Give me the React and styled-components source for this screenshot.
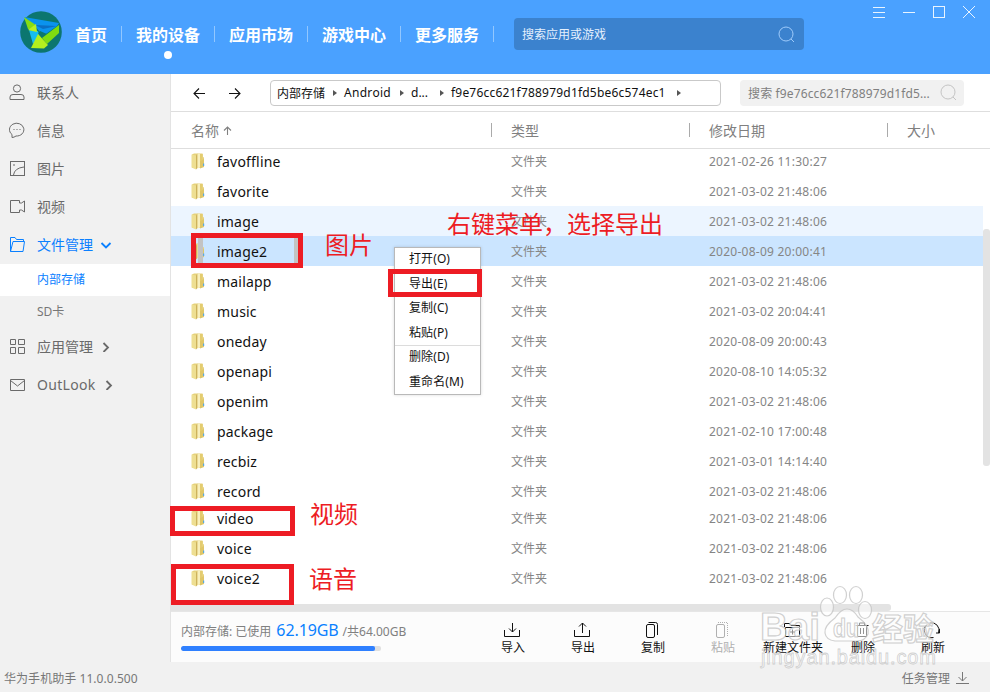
/* eslint-disable react/prop-types */
import styled, { createGlobalStyle } from 'styled-components';

const GlobalStyle = createGlobalStyle`
* {
    box-sizing: border-box;
}
body {
    margin: 0;
    font-family: "Noto Sans", "Noto Sans CJK SC", sans-serif;
    font-size: 12px;
    overflow: hidden;
}
svg {
    display: block;
    flex: none;
}
`;

const Window = styled.div`
    position: relative;
    display: flex;
    flex-direction: column;
    width: 990px;
    height: 692px;
    background: #f1f1f1;
    overflow: hidden;
    white-space: nowrap;
`;

/* ---------- header ---------- */

const Header = styled.header`
    display: flex;
    height: 74px;
    padding-left: 20px;
    background: #4aa1ff;
`;

const Logo = styled.svg`
    margin-top: 11px;
`;

const Nav = styled.nav`
    display: flex;
    height: 30px;
    margin: 19px 0 0 13px;
`;

const NavItem = styled.div`
    position: relative;
    display: flex;
    align-items: center;
    margin-right: 14px;
    padding-top: 1px;
    line-height: 30px;
    font-size: 16px;
    font-weight: bold;
    color: #fff;

    &::after {
        content: "";
        width: 1px;
        height: 16px;
        margin: -2px 0 0 14px;
        background: #92c7ff;
    }
`;

const ActiveDot = styled.i`
    position: absolute;
    left: 28px;
    top: 32px;
    width: 8px;
    height: 8px;
    border-radius: 50%;
    background: #fff;
`;

const AppSearch = styled.div`
    display: flex;
    align-items: center;
    justify-content: space-between;
    width: 290px;
    height: 32px;
    margin: 18px 0 0 6px;
    padding: 0 9px 0 8px;
    border-radius: 4px;
    background: #3b82ce;
    color: #e4f0fd;
`;

const WindowButtons = styled.div`
    display: flex;
    gap: 16px;
    margin: 5px 14px 0 auto;
`;

/* ---------- sidebar ---------- */

const Body = styled.div`
    display: flex;
    height: 588px;
`;

const Sidebar = styled.aside`
    width: 171px;
    border-right: 1px solid #e3e3e3;
`;

const SideItem = styled.div`
    display: flex;
    align-items: center;
    height: 38px;
    padding: 0 0 2px 9px;
    font-size: 14px;
    color: ${({ $active }) => ($active ? '#0a80ff' : '#6a6a6a')};

    span {
        margin: 0 7px 0 12px;
        letter-spacing: ${({ $spacing }) => $spacing || 0}px;
    }
`;

const SubItem = styled.div`
    height: 32px;
    padding-left: 37px;
    line-height: 32px;
    background: ${({ $active }) => ($active ? '#fff' : 'transparent')};
    color: ${({ $active }) => ($active ? '#0a80ff' : '#777')};
`;

/* ---------- main panel ---------- */

const Main = styled.main`
    display: flex;
    flex-direction: column;
    width: 819px;
    background: #fff;
`;

const PathBar = styled.div`
    display: flex;
    align-items: center;
    height: 38px;
    padding-left: 22px;
    border-bottom: 1px solid #dedede;
`;

const Arrows = styled.div`
    display: flex;
    gap: 24px;
    width: 77px;
    color: #111;
`;

const Breadcrumb = styled.div`
    display: flex;
    align-items: center;
    width: 451px;
    height: 26px;
    padding-left: 6px;
    border: 1px solid #c9c9c9;
    border-radius: 4px;
    color: #111;
`;

const Crumb = styled.span`
    width: ${({ $width }) => $width}px;
    letter-spacing: ${({ $spacing }) => $spacing || 0}px;
`;

const CrumbArrow = styled.i`
    margin: 1px 7px 0 8px;
    border-left: 4px solid #555;
    border-top: 3px solid transparent;
    border-bottom: 3px solid transparent;
`;

const FolderSearch = styled.div`
    display: flex;
    align-items: center;
    justify-content: space-between;
    width: 224px;
    height: 26px;
    margin-left: 19px;
    padding: 0 7px 0 8px;
    border-radius: 4px;
    background: #f1f1f1;
    color: #808080;
    letter-spacing: 0.13px;
`;

const TableHead = styled.div`
    display: grid;
    grid-template-columns: 321px 198px 198px 1fr;
    align-items: center;
    height: 37px;
    border-bottom: 1px solid #dedede;
    font-size: 14px;
    color: #808080;
`;

const HeadCell = styled.div`
    display: flex;
    align-items: center;
    gap: 4px;
    height: 14px;
    padding-left: ${({ $first }) => ($first ? 20 : 19)}px;
    border-right: 1px solid #aaa;

    &:last-child {
        border-right: none;
    }
`;

const ListArea = styled.div`
    display: flex;
    height: 455px;
    overflow: hidden;
`;

const Rows = styled.div`
    width: 812px;
    margin-top: -3px;
`;

const Row = styled.div`
    display: grid;
    grid-template-columns: 20px 26px 294px 198px 1fr;
    align-items: start;
    height: ${({ $short }) => ($short ? 27 : 30)}px;
    background: ${({ $tone }) => $tone || 'transparent'};
    color: #858585;

    svg {
        margin-top: 7px;
    }
`;

const FileName = styled.span`
    line-height: 32px;
    font-size: 14px;
    letter-spacing: 0.2px;
    color: #111;
`;

const Cell = styled.span`
    line-height: 32px;
    letter-spacing: ${({ $spacing }) => $spacing || 0}px;
`;

const VScroll = styled.div`
    width: 7px;
    height: 237px;
    margin-top: 80px;
    border-radius: 3px;
    background: #e3e3e3;
`;

const HScroll = styled.div`
    width: 720px;
    height: 7px;
    border-radius: 0 3px 3px 0;
    background: #e3e3e3;
`;

const ActionBar = styled.div`
    display: flex;
    height: 51px;
    padding-left: 10px;
    border-top: 1px solid #e6e6e6;
    background: #fcfcfc;
`;

const Storage = styled.div`
    width: 297px;
    padding-top: 6px;
    color: #808080;
`;

const StorageText = styled.div`
    display: flex;
    align-items: baseline;
    height: 28px;
    line-height: 24px;
`;

const Used = styled.b`
    margin: 0 4px 0 5px;
    font-size: 16px;
    font-weight: normal;
    letter-spacing: -0.1px;
    color: #0a80ff;
`;

const Bar = styled.div`
    width: 200px;
    height: 5px;
    border-radius: 2px;
    background: #e0e0e0;
    overflow: hidden;

    &::before {
        content: "";
        display: block;
        width: 194px;
        height: 5px;
        border-radius: 2px;
        background: #2f80ff;
    }
`;

const Action = styled.div`
    display: flex;
    flex-direction: column;
    align-items: center;
    width: 70px;
    padding-top: 9px;
    line-height: 18px;
    color: ${({ $disabled }) => ($disabled ? '#b0b0b0' : '#111')};

    svg {
        margin-left: -2px;
    }
`;

const StatusBar = styled.footer`
    display: flex;
    align-items: center;
    justify-content: space-between;
    height: 30px;
    padding: 2px 21px 0 4px;
    letter-spacing: 0.05px;
    color: #777;
`;

const TaskLink = styled.div`
    display: flex;
    align-items: center;
    gap: 5px;
`;

/* ---------- things lying over the window ---------- */

const Menu = styled.div`
    position: absolute;
    left: 394px;
    top: 247px;
    width: 87px;
    height: 148px;
    border: 1px solid #b9b9b9;
    background: #fff;
    box-shadow: 0 0 3px rgba(0, 0, 0, 0.15);
`;

const MenuItem = styled.div`
    height: 24.5px;
    padding-left: 14px;
    line-height: 22px;
    letter-spacing: 0.1px;
    color: #111;
    border-bottom: ${({ $last }) => ($last ? '1px solid #dcdcdc' : 'none')};
`;

const Frame = styled.div`
    position: absolute;
    left: ${({ $x }) => $x}px;
    top: ${({ $y }) => $y}px;
    width: ${({ $w }) => $w}px;
    height: ${({ $h }) => $h}px;
    border: 5px solid #ed1c24;
`;

const Smudge = styled.i`
    position: absolute;
    top: 0;
    left: ${({ $x }) => $x}px;
    width: ${({ $w }) => $w}px;
    height: 100%;
    background: #c3c3c3;
`;

const Note = styled.div`
    position: absolute;
    left: ${({ $x }) => $x}px;
    top: ${({ $y }) => $y}px;
    font-size: 24px;
    line-height: 30px;
    color: #ed1c24;
`;

const Watermark = styled.svg`
    position: absolute;
    left: 755px;
    top: 580px;
`;

/* ---------- icons ---------- */

const Stroke = ({ size = 16, w = 1, children, ...rest }) => (
  <svg width={size} height={size} viewBox={`0 0 ${size} ${size}`} fill="none" stroke="currentColor" strokeWidth={w} {...rest}>
    {children}
  </svg>
);

const HuaweiLogo = () => (
  <Logo width="42" height="42" viewBox="0 0 42 42">
    <circle cx="21" cy="21" r="20.8" fill="#0c766f" />
    <path d="M4 6 L39 12 L37 15 L23 25 L15 15 Z" fill="#0a93ee" />
    <path d="M15 14 L37 15 L23 18 Z" fill="#0a6fc4" />
    <path d="M9 19 L18 20 L20 26 L13 33 Z" fill="#16bdf2" />
    <path d="M20 20 L27 23 L22 27 L18 23 Z" fill="#0c766f" />
    <path d="M39 14 L39 22 L27 33 L22 27 Z" fill="#7fdc10" />
    <path d="M4 6 L15 13.5 L13 18 L8 18 Z" fill="#86dc14" />
    <path d="M8 19 L16 13 L17 21 Z" fill="#b9ef22" />
    <path d="M18 23 L28 34 L24 37.5 L11 37 Z" fill="#b4f01e" />
  </Logo>
);

const SearchIcon = ({ color }) => (
  <Stroke size={17} color={color}>
    <circle cx="8" cy="8" r="7" />
    <path d="M13 13 L16 16" />
  </Stroke>
);

const FolderIcon = () => (
  <svg width="14" height="17" viewBox="0 0 14 17">
    <path d="M1 1.5 L3 .5 H11 Q12 .5 12 1.5 V4 L13 4.5 V13.5 L9 15 H1 Z" fill="#e6d27c" />
    <path d="M.5 1.5 L5 2.5 V16.5 L.5 14.5 Z" fill="#eedf92" />
    <path d="M5 2.5 L6.5 .5 V15 L5 16.5 Z" fill="#cdb25c" />
    <path d="M6.5 .8 H9 V14.5 L6.5 15.5 Z" fill="#f8efbc" />
    <path d="M9 1 H11 V7 L9 8 Z" fill="#e4cc70" />
    <path d="M9 8 L13 6 V14 L9 15.5 Z" fill="#dfc668" />
    <rect x="12" y="10.5" width="1.2" height="2.5" fill="#58a8de" />
  </svg>
);

const sideIcons = {
  contact: (
    <Stroke>
      <circle cx="8" cy="4.5" r="3.6" />
      <path d="M1 15.5 V13 Q1 10.5 4 10.5 H12 Q15 10.5 15 13 V15.5 Z" />
    </Stroke>
  ),
  message: (
    <Stroke>
      <path d="M3 15.5 V12.5 A7.2 6.4 0 1 1 7 14 Q5 15.5 3 15.5 Z" />
      <path d="M4.5 7.5 h1 M7.5 7.5 h1 M10.5 7.5 h1" />
    </Stroke>
  ),
  picture: (
    <Stroke>
      <rect x="1.5" y="1.5" width="14" height="14" />
      <path d="M4 5 h2 M4.5 15 Q5.5 8 15 7" />
    </Stroke>
  ),
  video: (
    <Stroke>
      <path d="M10.5 5 V2.5 H1.5 V14.5 H10.5 V12 L12.5 12 L15.5 14 V3 L12.5 5 H10.5" />
    </Stroke>
  ),
  files: (
    <Stroke>
      <path d="M1.5 15.5 V1.5 H6 L7.5 3.5 H14.5 V5.5 M1.5 15.5 L4 5.5 H15.5 L14 15.5 Z" />
    </Stroke>
  ),
  apps: (
    <Stroke>
      <path d="M1.5 1.5 h5 v5 h-5 Z M9.5 1.5 h6 v5 h-6 Z M1.5 9.5 h5 v6 h-5 Z M9.5 9.5 h6 v6 h-6 Z" />
    </Stroke>
  ),
  mail: (
    <Stroke>
      <path d="M1.5 3.5 h14 v11 h-14 Z M1.5 4.5 L8.5 10 L15.5 4.5" />
    </Stroke>
  ),
};

const ChevronDown = () => (
  <Stroke size={12} w={1.8}>
    <path d="M1.5 5 L6 9.5 L10.5 5" />
  </Stroke>
);

const ChevronRight = () => (
  <Stroke size={12} w={1.8}>
    <path d="M3.5 3 L8 7.5 L3.5 12" />
  </Stroke>
);

const ActionIcon = ({ children }) => (
  <svg width="18" height="18" viewBox="0 0 18 18" fill="none" stroke="currentColor">
    {children}
  </svg>
);

/* ---------- data ---------- */

const files = [
  ['favoffline', '2021-02-26 11:30:27'],
  ['favorite', '2021-03-02 21:48:06'],
  ['image', '2021-03-02 21:48:06', '#ecf5ff'],
  ['image2', '2020-08-09 20:00:41', '#cbe5ff'],
  ['mailapp', '2021-03-02 21:48:06'],
  ['music', '2021-03-02 20:04:41'],
  ['oneday', '2020-08-09 20:00:43'],
  ['openapi', '2020-08-10 14:05:32'],
  ['openim', '2021-03-02 21:48:06'],
  ['package', '2021-02-10 17:00:48'],
  ['recbiz', '2021-03-01 14:14:40'],
  ['record', '2021-03-02 21:48:06'],
  ['video', '2021-03-02 21:48:06'],
  ['voice', '2021-03-02 21:48:06'],
  ['voice2', '2021-03-02 21:48:06'],
];

const actions = [
  ['导入', <path key="i" d="M1.5 9 V15.5 H16.5 V9 M9.5 2 V11 M6 7.5 L9.5 11 L13 7.5" />],
  ['导出', <path key="i" d="M1.5 9 V15.5 H16.5 V9 M9.5 12 V2 M6 5.5 L9.5 2 L13 5.5" />],
  ['复制', (
    <g key="i">
      <rect x="3.5" y="3.5" width="8" height="13" rx="1.5" />
      <path d="M5.5 1.5 H12.5 Q14.5 1.5 14.5 3.5 V14" />
    </g>
  )],
  ['粘贴', (
    <g key="i">
      <rect x="3.5" y="3.5" width="8" height="13" rx="1.5" />
      <path d="M5 1.5 H14.5 V15" strokeDasharray="1 1" />
    </g>
  )],
  ['新建文件夹', <path key="i" d="M1.5 6 V2.5 H6.5 L8 4.5 H16.5 V6.5 H2.5 V15.5 H16.5 V6.5 M9.5 8.5 v5 M7 11 h5" />],
  ['删除', <path key="i" d="M2.5 4.5 H15.5 M6.5 4.5 V2 H11.5 V4.5 M4.5 4.5 V15.5 H13.5 V4.5 M7.5 7 V13 M10.5 7 V13" />],
  ['刷新', <path key="i" d="M10.5 16.5 A7.5 7.5 0 0 1 4 3.5 M6.5 2 A7.5 7.5 0 0 1 15.5 12 M16.5 8 V12 H13" />],
];

const App = () => {
  return (
    <>
      <GlobalStyle />
      <Window>
        <Header>
          <HuaweiLogo />
          <Nav>
            <NavItem>首页</NavItem>
            <NavItem>我的设备<ActiveDot /></NavItem>
            <NavItem>应用市场</NavItem>
            <NavItem>游戏中心</NavItem>
            <NavItem>更多服务</NavItem>
          </Nav>
          <AppSearch>
            搜索应用或游戏
            <SearchIcon color="#9fcbfb" />
          </AppSearch>
          <WindowButtons>
            <Stroke size={14} color="#e9f4ff"><path d="M1 2.5 H13 M1 7.5 H13 M1 12.5 H13" /></Stroke>
            <Stroke size={14} color="#e9f4ff"><path d="M1 7.5 H13" /></Stroke>
            <Stroke size={14} color="#e9f4ff"><rect x="1.5" y="1.5" width="11" height="11" /></Stroke>
            <Stroke size={14} color="#e9f4ff"><path d="M1 1 L13 13 M13 1 L1 13" /></Stroke>
          </WindowButtons>
        </Header>

        <Body>
          <Sidebar>
            <SideItem>{sideIcons.contact}<span>联系人</span></SideItem>
            <SideItem>{sideIcons.message}<span>信息</span></SideItem>
            <SideItem>{sideIcons.picture}<span>图片</span></SideItem>
            <SideItem>{sideIcons.video}<span>视频</span></SideItem>
            <SideItem $active>{sideIcons.files}<span>文件管理</span><ChevronDown /></SideItem>
            <SubItem $active>内部存储</SubItem>
            <SubItem>SD卡</SubItem>
            <SideItem>{sideIcons.apps}<span>应用管理</span><ChevronRight /></SideItem>
            <SideItem $spacing={0.3}>{sideIcons.mail}<span>OutLook</span><ChevronRight /></SideItem>
          </Sidebar>

          <Main>
            <PathBar>
              <Arrows>
                <Stroke size={12} w={1.1}><path d="M12 6.5 H1 M6 1.5 L1 6.5 L6 11.5" /></Stroke>
                <Stroke size={12} w={1.1}><path d="M0 6.5 H11 M6 1.5 L11 6.5 L6 11.5" /></Stroke>
              </Arrows>
              <Breadcrumb>
                <Crumb $width={48}>内部存储</Crumb>
                <CrumbArrow />
                <Crumb $width={48} $spacing={0.3}>Android</Crumb>
                <CrumbArrow />
                <Crumb $width={21}>d...</Crumb>
                <CrumbArrow />
                <Crumb $width={218} $spacing={0.2}>f9e76cc621f788979d1fd5be6c574ec1</Crumb>
                <CrumbArrow />
              </Breadcrumb>
              <FolderSearch>
                搜索 f9e76cc621f788979d1fd5...
                <SearchIcon color="#c4c4c4" />
              </FolderSearch>
            </PathBar>

            <TableHead>
              <HeadCell $first>
                名称
                <Stroke size={9} w={1.1}><path d="M4.5 9 V1 M1 4.5 L4.5 1 L8 4.5" /></Stroke>
              </HeadCell>
              <HeadCell>类型</HeadCell>
              <HeadCell>修改日期</HeadCell>
              <HeadCell>大小</HeadCell>
            </TableHead>

            <ListArea>
              <Rows>
                {files.map(([name, date, tone]) => (
                  <Row key={name} $tone={tone} $short={name === 'record'}>
                    <span />
                    <FolderIcon />
                    <FileName>{name}</FileName>
                    <Cell>文件夹</Cell>
                    <Cell $spacing={0.25}>{date}</Cell>
                  </Row>
                ))}
              </Rows>
              <VScroll />
            </ListArea>
            <HScroll />

            <ActionBar>
              <Storage>
                <StorageText>
                  内部存储: 已使用<Used>62.19GB</Used>/共64.00GB
                </StorageText>
                <Bar />
              </Storage>
              {actions.map(([label, icon]) => (
                <Action key={label} $disabled={label === '粘贴'}>
                  <ActionIcon>{icon}</ActionIcon>
                  {label}
                </Action>
              ))}
            </ActionBar>
          </Main>
        </Body>

        <StatusBar>
          <span>华为手机助手 11.0.0.500</span>
          <TaskLink>
            任务管理
            <Stroke size={14}><path d="M1 12.5 H14 M7.5 1 V10 M3.5 6 L7.5 10 L11.5 6" /></Stroke>
          </TaskLink>
        </StatusBar>

        <Menu>
          <MenuItem>打开(O)</MenuItem>
          <MenuItem>导出(E)</MenuItem>
          <MenuItem>复制(C)</MenuItem>
          <MenuItem $last>粘贴(P)</MenuItem>
          <MenuItem>删除(D)</MenuItem>
          <MenuItem>重命名(M)</MenuItem>
        </Menu>

        <Frame $x={191} $y={233} $w={112} $h={35}>
          <Smudge $x={2} $w={5} />
          <Smudge $x={98} $w={4} />
        </Frame>
        <Frame $x={388} $y={269} $w={94} $h={28} />
        <Frame $x={170} $y={506} $w={125} $h={30} />
        <Frame $x={171} $y={564} $w={123} $h={41} />
        <Note $x={325} $y={230}>图片</Note>
        <Note $x={447} $y={209}>右键菜单，选择导出</Note>
        <Note $x={310} $y={499}>视频</Note>
        <Note $x={309} $y={564}>语音</Note>

        <Watermark width="190" height="95" fill="#fff" fillOpacity="0.55" stroke="#c4c4c4" strokeOpacity="0.8" strokeWidth="1.2" fontFamily='"Liberation Sans", "Noto Sans CJK SC", sans-serif' fontWeight="bold">
          <ellipse cx="72" cy="27" rx="6.5" ry="9" />
          <ellipse cx="85" cy="15" rx="6.5" ry="8.5" />
          <ellipse cx="101" cy="15" rx="6.5" ry="8.5" />
          <ellipse cx="110" cy="30" rx="6.5" ry="8.5" />
          <path d="M92 29 Q98 29 103 37 Q115 46 113 54 Q110 61 102 61 H80 Q71 60 70 53 Q69 46 80 38 Q86 29 92 29 Z" />
          <text x="5" y="60" fontSize="38" textLength="60" lengthAdjust="spacingAndGlyphs">Bai</text>
          <text x="78" y="57" fontSize="25" textLength="26" lengthAdjust="spacingAndGlyphs">du</text>
          <text x="117" y="60" fontSize="31" textLength="62">经验</text>
          <text x="6" y="84" fontSize="20" textLength="175" fontWeight="normal" strokeWidth="0.8">jingyan.baidu.com</text>
        </Watermark>
      </Window>
    </>
  );
};

export default App;
